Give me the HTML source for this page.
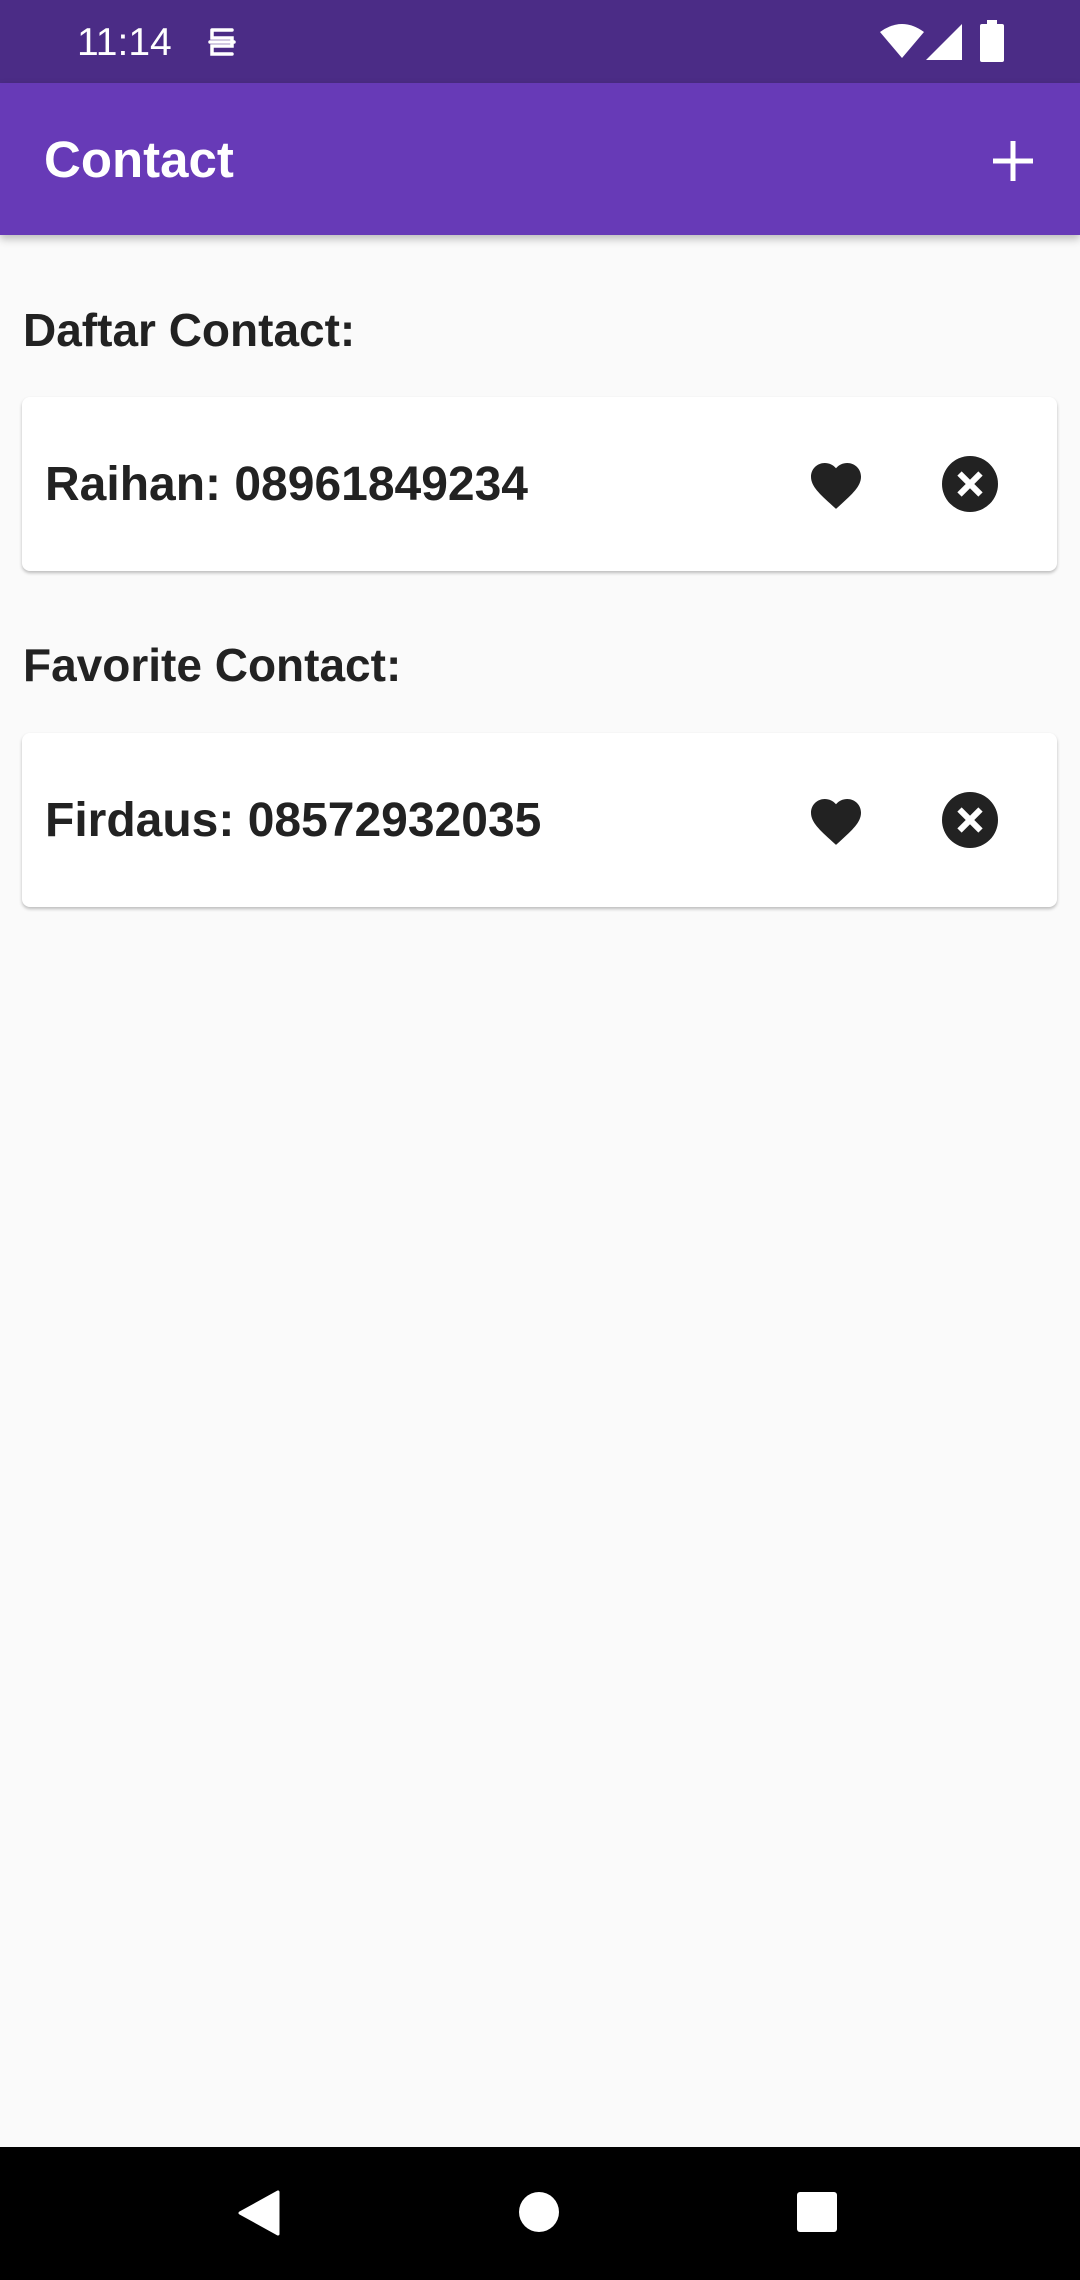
<!DOCTYPE html>
<html><head><meta charset="utf-8"><style>
*{margin:0;padding:0;box-sizing:border-box}
body{width:1080px;height:2280px;background:#fafafa;font-family:"Liberation Sans",sans-serif;position:relative;overflow:hidden}
.status{position:absolute;top:0;left:0;width:1080px;height:83px;background:#4b2c86;color:#fff}
.appbar{position:absolute;top:83px;left:0;width:1080px;height:152px;background:#673ab7;box-shadow:0 4px 8px rgba(0,0,0,.25)}
.title{position:absolute;left:44px;top:45px;font-size:51px;font-weight:bold;color:#fff;line-height:64px}
.h{position:absolute;left:23px;font-size:46px;font-weight:bold;color:#222}
.card{position:absolute;left:22px;width:1035px;height:174px;background:#fff;border-radius:8px;box-shadow:0 2px 3px rgba(0,0,0,.25)}
.card .t{position:absolute;left:23px;top:60px;font-size:48px;font-weight:bold;color:#222;line-height:56px}
.nav{position:absolute;top:2147px;left:0;width:1080px;height:133px;background:#000}
</style></head><body>
<div class="status">
<div style="position:absolute;left:77px;top:20px;font-size:39px;line-height:46px">11:14</div>
<svg style="position:absolute;left:206px;top:26px" width="32" height="34" viewBox="0 0 32 34"><path d="M6 4h20M6 4v8h20v8H6v8h20M4 16h24" stroke="#fff" stroke-width="3.5" fill="none" stroke-linecap="round"/></svg>
<svg style="position:absolute;left:880px;top:24px" width="44" height="36" viewBox="0 0 44 36"><path d="M22 34L0 8Q22-8 44 8Z" fill="#fff"/></svg>
<svg style="position:absolute;left:926px;top:24px" width="36" height="36" viewBox="0 0 36 36"><path d="M36 0V36H0Z" fill="#fff"/></svg>
<svg style="position:absolute;left:980px;top:20px" width="24" height="42" viewBox="0 0 24 42"><rect x="7" y="0" width="10" height="5" fill="#fff"/><rect x="0" y="4" width="24" height="38" rx="2" fill="#fff"/></svg>
</div>
<div class="appbar"><div class="title">Contact</div>
<svg style="position:absolute;left:993px;top:58px" width="40" height="40" viewBox="0 0 40 40"><path d="M20 0V40M0 20H40" stroke="#fff" stroke-width="5"/></svg>
</div>
<div class="h" style="top:303px">Daftar Contact:</div>
<div class="card" style="top:397px"><div class="t">Raihan: 08961849234</div>
<svg style="position:absolute;left:784px;top:58px" width="60" height="56" viewBox="0 0 24 22"><path d="M12 21.35l-1.45-1.32C5.4 15.36 2 12.28 2 8.5 2 5.42 4.42 3 7.5 3c1.74 0 3.41.81 4.5 2.09C13.09 3.81 14.76 3 16.5 3 19.58 3 22 5.42 22 8.5c0 3.78-3.4 6.86-8.55 11.54L12 21.35z" fill="#222"/></svg>
<svg style="position:absolute;left:920px;top:59px" width="56" height="56" viewBox="0 0 24 24"><circle cx="12" cy="12" r="12" fill="#222"/><path d="M7.5 7.5l9 9M16.5 7.5l-9 9" stroke="#fff" stroke-width="2.6"/></svg>
</div>
<div class="h" style="top:638px">Favorite Contact:</div>
<div class="card" style="top:733px"><div class="t">Firdaus: 08572932035</div>
<svg style="position:absolute;left:784px;top:58px" width="60" height="56" viewBox="0 0 24 22"><path d="M12 21.35l-1.45-1.32C5.4 15.36 2 12.28 2 8.5 2 5.42 4.42 3 7.5 3c1.74 0 3.41.81 4.5 2.09C13.09 3.81 14.76 3 16.5 3 19.58 3 22 5.42 22 8.5c0 3.78-3.4 6.86-8.55 11.54L12 21.35z" fill="#222"/></svg>
<svg style="position:absolute;left:920px;top:59px" width="56" height="56" viewBox="0 0 24 24"><circle cx="12" cy="12" r="12" fill="#222"/><path d="M7.5 7.5l9 9M16.5 7.5l-9 9" stroke="#fff" stroke-width="2.6"/></svg>
</div>
<div class="nav">
<svg style="position:absolute;left:238px;top:43px" width="42" height="46" viewBox="0 0 42 46"><path d="M40 2V44L2 23Z" fill="#fff" stroke="#fff" stroke-width="3" stroke-linejoin="round"/></svg>
<div style="position:absolute;left:519px;top:45px;width:40px;height:40px;border-radius:50%;background:#fff"></div>
<div style="position:absolute;left:797px;top:45px;width:40px;height:40px;border-radius:3px;background:#fff"></div>
</div>
</body></html>
